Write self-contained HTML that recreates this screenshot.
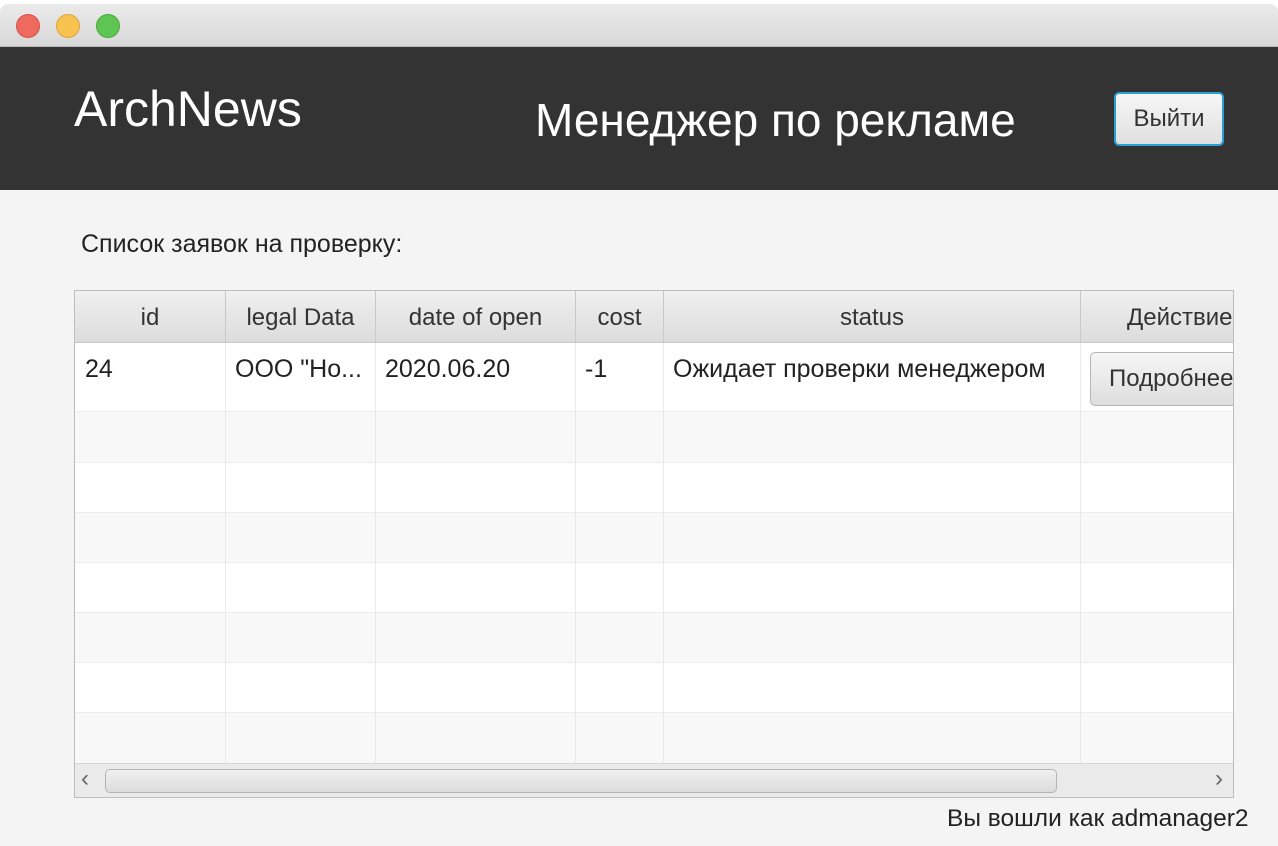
<!DOCTYPE html>
<html><head><meta charset="utf-8"><style>
*{margin:0;padding:0;box-sizing:border-box}
body{width:1278px;height:846px;background:#fff;font-family:"Liberation Sans","DejaVu Sans",sans-serif;position:relative;overflow:hidden;color:#333}
.win{position:absolute;left:0;top:4px;width:1278px;height:842px;background:#f4f4f4;border-radius:8px 8px 0 0;overflow:hidden}
.tb{height:43px;background:linear-gradient(#ebebeb,#d8d8d8);border-bottom:1px solid #b8b8b8;position:relative}
.dot{position:absolute;top:10px;width:24px;height:24px;border-radius:50%}
.hdr{position:absolute;top:43px;left:0;width:1278px;height:143px;background:#333}
.abs{position:absolute;white-space:nowrap}
.tbl{position:absolute;left:74px;top:286px;width:1160px;height:508px;border:1px solid #bdbdbd;background:#fff;overflow:hidden}
.th{position:absolute;top:0;height:52px;background:linear-gradient(#f0f0f0,#dcdcdc);border-right:1px solid #c8c8c8;border-bottom:1px solid #c8c8c8;font-size:24px;text-align:center;line-height:54px;color:#333;overflow:hidden;white-space:nowrap}
.row{position:absolute;left:0;width:1160px}
.vl{position:absolute;top:52px;width:1px;height:420px;background:#e8e8e8}
.cell{position:absolute;font-size:25px;color:#222;white-space:nowrap}
</style></head><body>
<div class="win">
<div class="tb">
<div class="dot" style="left:16px;background:#ee6a5e;border:1px solid #d55045"></div>
<div class="dot" style="left:56px;background:#f8c250;border:1px solid #dba43a"></div>
<div class="dot" style="left:96px;background:#5ec552;border:1px solid #48a83c"></div>
</div>
<div class="hdr">
<div class="abs" style="left:74px;top:33px;font-size:50px;color:#fff">ArchNews</div>
<div class="abs" style="left:535px;top:46px;font-size:46px;color:#fff">Менеджер по рекламе</div>
<div class="abs" style="left:1114px;top:45px;width:110px;height:54px;border:2px solid #2a9fd6;border-radius:5px;background:linear-gradient(#f6f6f6,#e0e0e0);font-size:24px;text-align:center;line-height:50px;color:#333">Выйти</div>
</div>
<div class="abs" style="left:81px;top:226px;font-size:25px;color:#222">Список заявок на проверку:</div>
<div class="tbl">
<div class="row" style="top:52px;height:69px;background:#fff;border-bottom:1px solid #ececec"></div>
<div class="row" style="top:121px;height:50px;background:#f8f8f8"></div>
<div class="row" style="top:171px;height:50px;background:#fff;border-top:1px solid #ececec"></div>
<div class="row" style="top:221px;height:50px;background:#f8f8f8;border-top:1px solid #ececec"></div>
<div class="row" style="top:271px;height:50px;background:#fff;border-top:1px solid #ececec"></div>
<div class="row" style="top:321px;height:50px;background:#f8f8f8;border-top:1px solid #ececec"></div>
<div class="row" style="top:371px;height:50px;background:#fff;border-top:1px solid #ececec"></div>
<div class="row" style="top:421px;height:52px;background:#f8f8f8;border-top:1px solid #ececec"></div>
<div class="vl" style="left:150px"></div><div class="vl" style="left:300px"></div><div class="vl" style="left:500px"></div><div class="vl" style="left:588px"></div><div class="vl" style="left:1005px"></div>
<div class="th" style="left:0;width:151px">id</div>
<div class="th" style="left:151px;width:150px">legal Data</div>
<div class="th" style="left:301px;width:200px">date of open</div>
<div class="th" style="left:501px;width:88px">cost</div>
<div class="th" style="left:589px;width:417px">status</div>
<div class="th" style="left:1006px;width:160px;text-align:left;padding-left:46px">Действие</div>
<div class="cell" style="left:10px;top:64px">24</div>
<div class="cell" style="left:160px;top:64px">ООО "Но...</div>
<div class="cell" style="left:310px;top:64px">2020.06.20</div>
<div class="cell" style="left:510px;top:64px">-1</div>
<div class="cell" style="left:598px;top:64px">Ожидает проверки менеджером</div>
<div class="abs" style="left:1015px;top:61px;width:160px;height:54px;border:1px solid #b5b5b5;border-radius:5px;background:linear-gradient(#f6f6f6,#dedede);font-size:24px;line-height:52px;padding-left:18px;color:#333">Подробнее</div>
<div class="abs" style="left:0;top:472px;width:1160px;height:35px;background:#eaeaea;border-top:1px solid #d6d6d6"></div>
<div class="abs" style="left:30px;top:478px;width:952px;height:24px;border:1px solid #b5b5b5;border-radius:5px;background:linear-gradient(#f0f0f0,#dcdcdc)"></div>
<div class="abs" style="left:6px;top:474px;font-size:24px;color:#666">‹</div>
<div class="abs" style="left:1140px;top:474px;font-size:24px;color:#666">›</div>
</div>
<div class="abs" style="left:947px;top:801px;font-size:24.5px;color:#222">Вы вошли как admanager2</div>
</div>
</body></html>
